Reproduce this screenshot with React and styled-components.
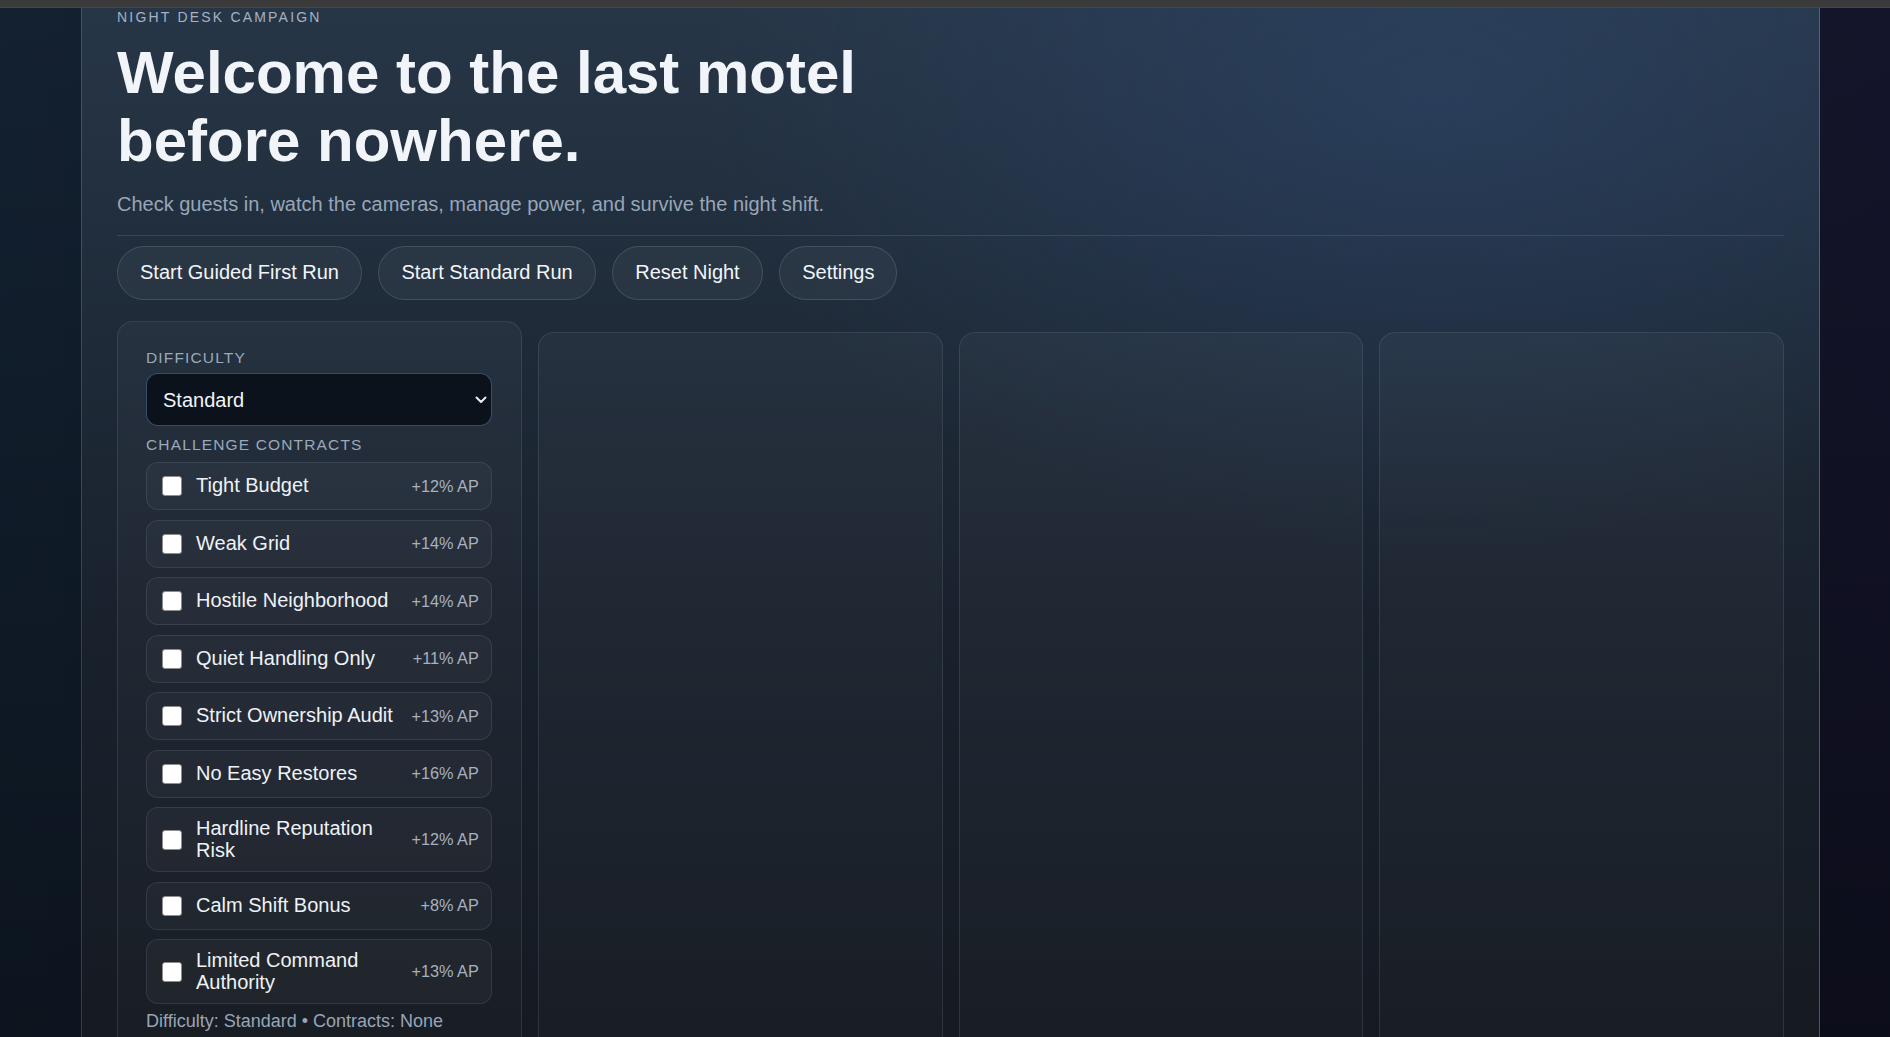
import React from 'react';
import styled, { createGlobalStyle } from 'styled-components';

const GlobalStyle = createGlobalStyle`
  * {
    box-sizing: border-box;
  }
  html, body {
    margin: 0;
    padding: 0;
    height: 100%;
    overflow: hidden;
  }
  body {
    font-family: "Liberation Sans", Arial, sans-serif;
    color: #e5e9f0;
    background:
      linear-gradient(180deg, rgba(0, 0, 0, 0) 0%, rgba(0, 0, 0, 0.38) 100%),
      linear-gradient(90deg, #132131 0%, #121a28 50%, #14152b 100%);
  }
`;

const TopBar = styled.div`
  height: 8px;
  background: #3b3b3b;
  border-bottom: 1px solid #474747;
`;
const Stage = styled.div`
  display: flex;
  padding-left: 81px;
`;
const Shell = styled.main`
  width: 1739px;
  min-height: 1120px;
  padding: 0 35px;
  border-left: 1px solid rgba(110, 160, 200, 0.28);
  border-right: 1px solid rgba(60, 160, 190, 0.55);
  background:
    radial-gradient(ellipse 42% 40% at 78% 8%, rgba(48, 78, 125, 0.4), rgba(48, 78, 125, 0) 100%),
    linear-gradient(180deg, #273647 0%, #1f2b39 28%, #19212d 55%, #15191f 100%);
`;
const Eyebrow = styled.div`
  padding-top: 1px;
  font-size: 14px;
  line-height: 17px;
  letter-spacing: 2.2px;
  text-transform: uppercase;
  color: #a3b2c4;
`;
const Title = styled.h1`
  margin: 13px 0 0 0;
  max-width: 800px;
  font-size: 60px;
  line-height: 68px;
  font-weight: 700;
  color: #f1f5f9;
`;
const Lead = styled.p`
  margin: 15px 0 0 0;
  font-size: 20px;
  line-height: 28px;
  color: #97a6b8;
`;
const Toolbar = styled.div`
  display: flex;
  gap: 16.5px;
  margin-top: 17px;
  padding-top: 10px;
  border-top: 1px solid rgba(148, 163, 184, 0.2);
`;
const PillButton = styled.button`
  height: 54px;
  padding: 0 22px 1px 22px;
  font-family: inherit;
  font-size: 20px;
  color: #f1f5f9;
  background: rgba(255, 255, 255, 0.045);
  border: 1px solid rgba(148, 163, 184, 0.24);
  border-radius: 999px;
  cursor: pointer;
`;
const Board = styled.div`
  display: grid;
  grid-template-columns: repeat(4, 1fr);
  gap: 16px;
  margin-top: 21px;
`;
const Card = styled.section`
  margin-top: ${p => (p.$lowered ? '11px' : '0')};
  min-height: 760px;
  border: 1px solid rgba(148, 163, 184, 0.17);
  border-radius: 16px;
  background: linear-gradient(180deg, rgba(255, 255, 255, 0.035) 0%, rgba(255, 255, 255, 0.015) 100%);
`;
const Setup = styled(Card)`
  display: flex;
  flex-direction: column;
  padding: 27px 29px 28px 28px;
`;
const FieldLabel = styled.div`
  margin: ${p => p.$margin || '0'};
  font-size: 15.5px;
  line-height: 18px;
  letter-spacing: 1.15px;
  text-transform: uppercase;
  color: #9aa9ba;
`;
const SelectWrap = styled.div`
  position: relative;
  margin-top: 6px;
`;
const Select = styled.select`
  width: 100%;
  height: 53px;
  padding: 0 16px;
  appearance: none;
  font-family: inherit;
  font-size: 20px;
  color: #f1f5f9;
  background: #0c121b;
  border: 1px solid rgba(90, 140, 190, 0.5);
  border-radius: 12px;
`;
const Chevron = styled.svg`
  position: absolute;
  right: 5px;
  top: 50%;
  transform: translateY(-50%);
  pointer-events: none;
`;
const ContractList = styled.div`
  display: flex;
  flex-direction: column;
  gap: 9.5px;
`;
const ContractRow = styled.label`
  display: flex;
  align-items: center;
  gap: 11px;
  padding: 10px 12px;
  background: rgba(255, 255, 255, 0.03);
  border: 1px solid rgba(148, 163, 184, 0.16);
  border-radius: 12px;
`;
const Box = styled.input`
  flex: none;
  width: 20px;
  height: 20px;
  margin: 3px;
  appearance: none;
  background: #ffffff;
  border: 1px solid #8d8d8d;
  border-radius: 3px;
`;
const ContractName = styled.span`
  flex: 1;
  font-size: 20px;
  line-height: 21.5px;
  color: #eef2f7;
`;
const Bonus = styled.span`
  flex: none;
  font-size: 16.25px;
  color: #a6b1bf;
`;
const Summary = styled.div`
  margin-top: 7px;
  font-size: 18px;
  line-height: 21px;
  color: #98a5b6;
`;

const contracts = [
  ['Tight Budget', '+12% AP'],
  ['Weak Grid', '+14% AP'],
  ['Hostile Neighborhood', '+14% AP'],
  ['Quiet Handling Only', '+11% AP'],
  ['Strict Ownership Audit', '+13% AP'],
  ['No Easy Restores', '+16% AP'],
  ['Hardline Reputation Risk', '+12% AP'],
  ['Calm Shift Bonus', '+8% AP'],
  ['Limited Command Authority', '+13% AP'],
];

const actions = ['Start Guided First Run', 'Start Standard Run', 'Reset Night', 'Settings'];

export default function App() {
  return (
    <>
      <GlobalStyle />
      <TopBar />
      <Stage>
        <Shell>
          <Eyebrow>Night Desk Campaign</Eyebrow>
          <Title>Welcome to the last motel before nowhere.</Title>
          <Lead>Check guests in, watch the cameras, manage power, and survive the night shift.</Lead>
          <Toolbar>
            {actions.map(label => (
              <PillButton key={label} type="button">{label}</PillButton>
            ))}
          </Toolbar>
          <Board>
            <Setup>
              <FieldLabel>Difficulty</FieldLabel>
              <SelectWrap>
                <Select defaultValue="standard">
                  <option value="relaxed">Relaxed</option>
                  <option value="standard">Standard</option>
                  <option value="hard">Hard</option>
                </Select>
                <Chevron width="12" height="8" viewBox="0 0 12 8" fill="none">
                  <path d="M1.5 1.5 L6 6 L10.5 1.5" stroke="#e8edf3" strokeWidth="2" strokeLinecap="round" strokeLinejoin="round" />
                </Chevron>
              </SelectWrap>
              <FieldLabel $margin="10px 0 8px 0">Challenge Contracts</FieldLabel>
              <ContractList>
                {contracts.map(([name, bonus]) => (
                  <ContractRow key={name}>
                    <Box type="checkbox" />
                    <ContractName>{name}</ContractName>
                    <Bonus>{bonus}</Bonus>
                  </ContractRow>
                ))}
              </ContractList>
              <Summary>Difficulty: Standard • Contracts: None</Summary>
            </Setup>
            <Card $lowered />
            <Card $lowered />
            <Card $lowered />
          </Board>
        </Shell>
      </Stage>
    </>
  );
}
